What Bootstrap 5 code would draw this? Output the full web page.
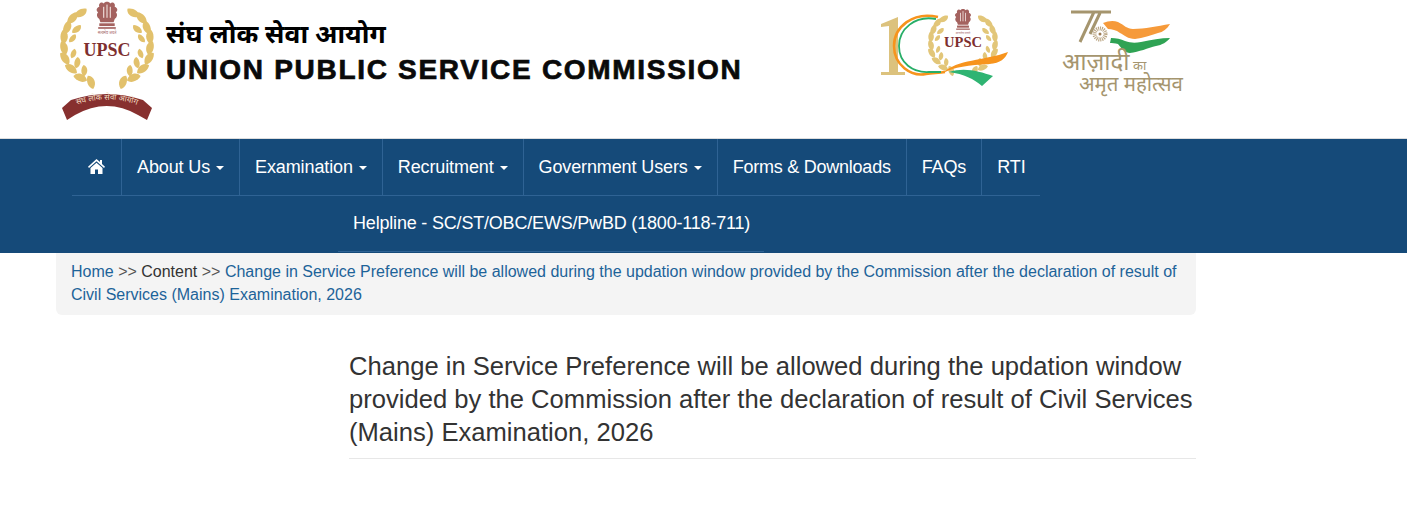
<!DOCTYPE html>
<html lang="en">
<head>
    <meta charset="UTF-8">
    <meta name="viewport" content="width=device-width, initial-scale=1.0">
    <title>Union Public Service Commission</title>
    <link rel="stylesheet" href="https://cdn.jsdelivr.net/npm/bootstrap@5.3.0/dist/css/bootstrap.min.css">
    <style>
        body {
            font-family: "Liberation Sans", Arial, sans-serif;
            color: #333;
            background: #fff;
            overflow: hidden;
        }
        .site-head {
            height: 139px;
            border-bottom: 1px solid #ddd;
            padding-left: 60px;
        }
        .upsc-logo { width: 94px; height: 122px; margin-top: 1px; }
        .head-names { margin-left: 12px; padding-top: 12px; }
        .name-hi {
            font-family: "Noto Sans", sans-serif;
            font-size: 26.300px;
            font-weight: 700;
            line-height: 42px;
            color: #000;
        }
        .name-en {
            font-size: 28px;
            font-weight: 700;
            line-height: 32px;
            letter-spacing: 1.7px;
            color: #0a0a0a;
            -webkit-text-stroke: .7px #0a0a0a;
        }
        .logo-hundred { width: 132px; height: 84px; position: absolute; left: 879px; top: 7px; }
        .logo-amrit { width: 126px; height: 90px; position: absolute; left: 1061px; top: 9px; }
        .main-bar {
            background: #154a79;
            height: 114px;
            padding-left: 72px;
        }
        .main-menu { width: 968px; height: 57px; border-bottom: 1px solid #2f6394; flex-wrap: nowrap; }
        .main-menu .nav-item { border-right: 1px solid #2f6394; }
        .main-menu .nav-item:last-child { border-right: 0; }
        .main-menu .nav-link,
        .help-link {
            color: #fff;
            font-size: 18px;
            line-height: 25px;
            padding: 16px 15px 15px;
            letter-spacing: -.12px;
            white-space: nowrap;
        }
        .main-menu .nav-link { height: 56px; }
        .main-menu .home-link { padding-left: 16px; padding-right: 16px; }
        .main-menu .tight-link { letter-spacing: -.24px; }
        .main-menu .dropdown-toggle::after {
            margin-left: 6px;
            border-width: 4px 4px 0;
            vertical-align: 3px;
        }
        .help-row { width: 426px; margin-left: 266px; border-bottom: 1px solid #2f6394; height: 56px; }
        .help-link { display: block; text-decoration: none; padding-top: 15px; letter-spacing: -.19px; }
        .home-ico { width: 17px; height: 15px; display: block; margin-top: 4px; }
        .page-wrap { width: 1140px; margin-left: 56px; }
        .crumbs {
            background: #f4f4f4;
            border-radius: 0 0 6px 6px;
            padding: 7px 15px 9px;
            font-size: 16px;
            line-height: 23px;
            color: #555;
        }
        .crumbs a { color: #1d6399; text-decoration: none; }
        .crumbs .here { color: #333; }
        .page-title {
            margin: 35px 0 0 293px;
            padding-bottom: 9px;
            border-bottom: 1px solid #e7e7e7;
            font-family: "Liberation Sans", Arial, sans-serif;
            font-size: 25.600px;
            font-weight: 400;
            line-height: 33px;
            color: #333;
        }
    </style>
</head>
<body>
    <svg width="0" height="0" class="position-absolute">
        <defs>
            <path id="leaf" d="M-7 0C-5-5 3-6 7-3 6 3-2 5-7 0Z"/>
            <g id="half-wreath">
                <use href="#leaf" transform="translate(21 13) rotate(-20)"/>
                <use href="#leaf" transform="translate(13 18) rotate(-40)"/>
                <use href="#leaf" transform="translate(8 27) rotate(-60)"/>
                <use href="#leaf" transform="translate(17 29) rotate(-30) scale(.8)"/>
                <use href="#leaf" transform="translate(5 36) rotate(-80)"/>
                <use href="#leaf" transform="translate(13 38) rotate(-40) scale(.7)"/>
                <use href="#leaf" transform="translate(5 47) rotate(-95)"/>
                <use href="#leaf" transform="translate(6 57) rotate(-115)"/>
                <use href="#leaf" transform="translate(14 53) rotate(-60) scale(.7)"/>
                <use href="#leaf" transform="translate(12 67) rotate(-135)"/>
                <use href="#leaf" transform="translate(18 62) rotate(-70) scale(.8)"/>
                <use href="#leaf" transform="translate(21 76) rotate(-150)"/>
                <use href="#leaf" transform="translate(25 70) rotate(-80) scale(.8)"/>
                <use href="#leaf" transform="translate(32 81) rotate(-100)"/>
            </g>
            <g id="ashoka">
                <path d="M-3-15C-5-17-8-15-7-12-10-11-10-8-8-7-10-5-9-2-7-1L-6 2H6L7-1C9-2 10-5 8-7 10-8 10-11 7-12 8-15 5-17 3-15 2-17-2-17-3-15Z"/>
                <g fill="#f1e2de">
                    <rect x="-3.500" y="-12" width="1" height="10"/>
                    <rect x="-.500" y="-14" width="1" height="12"/>
                    <rect x="2.500" y="-12" width="1" height="10"/>
                </g>
                <rect x="-7" y="3" width="14" height="2.500"/>
                <rect x="-8" y="6.500" width="16" height="1.500"/>
                <text y="13" text-anchor="middle" font-family="Noto Sans, sans-serif" font-size="3.500">सत्यमेव जयते</text>
            </g>
        </defs>
    </svg>

    <header class="site-head d-flex position-relative">
        <svg class="upsc-logo" viewBox="0 0 94 122">
            <g fill="#e2c16c">
                <use href="#half-wreath"/>
                <use href="#half-wreath" transform="translate(94 0) scale(-1 1)"/>
            </g>
            <use href="#ashoka" transform="translate(47 19) scale(1.100)" fill="#a4625f"/>
            <text x="47" y="55" text-anchor="middle" font-family="Liberation Serif, serif" font-weight="700" font-size="18" fill="#7e2f2f">UPSC</text>
            <path d="M2 107L11 99Q47 87 83 99L92 107 87 119 78 114Q47 96 15 114L7 119Z" fill="#87302f"/>
            <path id="ribbon-line" d="M14 105Q47 92 80 105" fill="none"/>
            <text text-anchor="middle" font-family="Noto Sans, sans-serif" font-size="8" fill="#f1dcc0"><textPath href="#ribbon-line" startOffset="50%">संघ लोक सेवा आयोग</textPath></text>
        </svg>
        <div class="head-names">
            <div class="name-hi">संघ लोक सेवा आयोग</div>
            <div class="name-en">UNION PUBLIC SERVICE COMMISSION</div>
        </div>
        <svg class="logo-hundred" viewBox="0 0 132 84">
            <path d="M2 17L19 10V65H26V68H2V65H10V19L2 20Z" fill="#dcc27d"/>
            <g fill="#e2c679">
                <use href="#half-wreath" transform="translate(49 3) scale(.75)"/>
                <use href="#half-wreath" transform="translate(119 3) scale(-.75 .75)"/>
            </g>
            <use href="#ashoka" transform="translate(84 16) scale(.85)" fill="#a4625f"/>
            <text x="84" y="40" text-anchor="middle" font-family="Liberation Serif, serif" font-weight="700" font-size="14.500" fill="#7e2f2f">UPSC</text>
            <path d="M59 10C34 4 15 20 15 39 15 58 32 70 47 67 54 66 60 66 66 65" fill="none" stroke="#f7941d" stroke-width="2.500"/>
            <path d="M57 12C36 8 20 22 20 39 20 56 34 66 50 65L62 65" fill="none" stroke="#27ae67" stroke-width="1.800"/>
            <path d="M64 66C78 52 105 54 129 45 126 52 122 56 110 57 90 58 75 60 64 66Z" fill="#f7941d"/>
            <path d="M70 65C85 60 100 64 114 69L103 79C95 72 85 67 70 65Z" fill="#2fb472"/>
        </svg>
        <svg class="logo-amrit" viewBox="0 0 126 90">
            <path d="M10 3H33L19 33M34 3H50M39 4L29 25" fill="none" stroke="#a5956e" stroke-width="3"/>
            <circle cx="39" cy="25" r="5.500" fill="none" stroke="#bba684" stroke-width="4" stroke-dasharray="1 .8"/>
            <circle cx="39" cy="25" r="1.500" fill="#9c7b54"/>
            <path d="M42 14C47 12 52 11 57 13 63 16 66 20 72 20 84 20 96 17 109 15 106 20 102 23 97 24 90 26 82 29 74 30 67 30 63 26 59 24 55 21 51 20 47 20Z" fill="#f69a3a"/>
            <path d="M50 29C55 29 60 30 64 32 70 34 74 34 80 33 90 31 100 29 109 29 106 33 101 36 95 37 87 39 78 43 69 44 64 44 60 39 57 35 54 34 51 34 49 34Z" fill="#2fa354"/>
            <text x="1" y="61" font-family="Noto Sans, sans-serif" font-size="24" fill="#a5956e">आज़ादी<tspan font-size="13"> का</tspan></text>
            <text x="18" y="82" font-family="Noto Sans, sans-serif" font-size="20.400" fill="#a5956e">अमृत महोत्सव</text>
        </svg>
    </header>

    <nav class="main-bar">
        <ul class="nav main-menu">
            <li class="nav-item"><a class="nav-link home-link" href="#" aria-label="Home">
                <svg class="home-ico" viewBox="0 0 17 15" fill="#fff"><path d="M8.500 0L12 3V1H14V5L17 7.800 16 9 8.500 2.300 1 9 0 7.800Z"/><path d="M8.500 3.700L14.500 9V15H10V10.500H7V15H2.500V9Z"/></svg>
            </a></li>
            <li class="nav-item"><a class="nav-link dropdown-toggle" href="#">About Us</a></li>
            <li class="nav-item"><a class="nav-link dropdown-toggle" href="#">Examination</a></li>
            <li class="nav-item"><a class="nav-link dropdown-toggle" href="#">Recruitment</a></li>
            <li class="nav-item"><a class="nav-link dropdown-toggle" href="#">Government Users</a></li>
            <li class="nav-item"><a class="nav-link tight-link" href="#">Forms &amp; Downloads</a></li>
            <li class="nav-item"><a class="nav-link" href="#">FAQs</a></li>
            <li class="nav-item"><a class="nav-link" href="#">RTI</a></li>
        </ul>
        <div class="help-row"><a class="help-link" href="#">Helpline - SC/ST/OBC/EWS/PwBD (1800-118-711)</a></div>
    </nav>

    <main class="page-wrap">
        <div class="crumbs">
            <a href="#">Home</a> &gt;&gt; <span class="here">Content</span> &gt;&gt; <a href="#">Change in Service Preference will be allowed during the updation window provided by the Commission after the declaration of result of Civil Services (Mains) Examination, 2026</a>
        </div>
        <h1 class="page-title">Change in Service Preference will be allowed during the updation window provided by the Commission after the declaration of result of Civil Services (Mains) Examination, 2026</h1>
    </main>
    <script src="https://cdn.jsdelivr.net/npm/bootstrap@5.3.0/dist/js/bootstrap.bundle.min.js"></script>
</body>
</html>
